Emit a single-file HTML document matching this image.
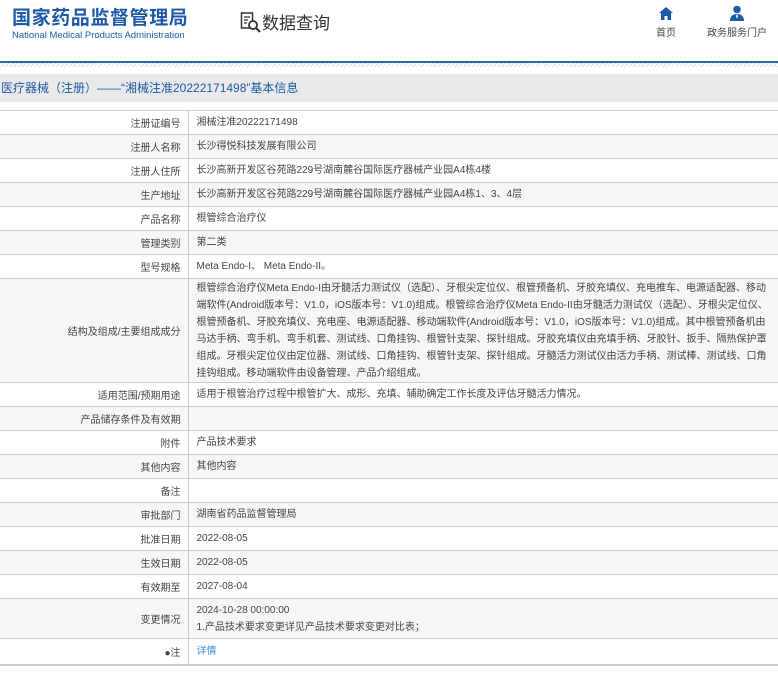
<!DOCTYPE html>
<html><head><meta charset="utf-8"><style>
*{margin:0;padding:0;box-sizing:border-box}
body{width:778px;height:673px;background:#fff;font-family:"Liberation Sans","Noto Sans CJK SC",sans-serif;position:relative;overflow:hidden;color:#333}
.abs{position:absolute}
.logo{left:12px;top:7px;font-size:19px;line-height:24px;font-weight:bold;color:#1c5aa8;letter-spacing:0.6px}
.en{left:12px;top:30px;font-size:9.5px;line-height:12px;color:#1c5aa8}
.sq{left:240px;top:9px;font-size:17px;color:#333}
.nav{font-size:10px;color:#444;text-align:center}
.line{left:0;top:61px;width:778px;height:2px;background:#1d6aa0}
.hatch{left:0;top:63px;width:778px;height:4px;background:repeating-linear-gradient(135deg,#ddd 0 1px,#fff 1px 3px)}
.bar{left:0;top:74px;width:778px;height:28px;background:#e9e9e9;font-size:12px;color:#1c5aa8;line-height:28px;padding-left:1px}
table{position:absolute;left:0;top:110px;width:778px;border-collapse:collapse;font-size:10px}
td{border:1px solid #ccc;height:24px;vertical-align:middle;color:#444}
td.l{width:188px;text-align:right;padding-right:7px;border-left:none}
td.v{padding-left:8px;border-right:none;line-height:17px}
tr:nth-child(even) td{background:#f6f6f6}
tr:last-child td{border-bottom:2px solid #ccc}
</style></head><body>
<div class="abs logo">国家药品监督管理局</div>
<div class="abs en">National Medical Products Administration</div>
<div class="abs sq"><svg width="22" height="22" viewBox="0 0 22 22" style="vertical-align:-4px"><rect x="1.5" y="2" width="11" height="15" fill="none" stroke="#333" stroke-width="1.5"/><path d="M4 6h6M4 9h4M4 12h3" stroke="#333" stroke-width="1.3"/><circle cx="13" cy="14" r="4" fill="#fff" stroke="#333" stroke-width="1.8"/><path d="M16 17l4 4" stroke="#333" stroke-width="2.2"/></svg>数据查询</div>
<svg class="abs" style="left:659px;top:7px" width="14" height="13" viewBox="0 0 14 13"><path d="M7 0L0 6h2v7h3.5V9h3v4H12V6h2z" fill="#1c5aa8"/></svg>
<div class="abs nav" style="left:646px;top:24px;width:40px">首页</div>
<svg class="abs" style="left:729px;top:5px" width="16" height="16" viewBox="0 0 16 16"><circle cx="8" cy="4.5" r="3.8" fill="#1c5aa8"/><path d="M1 16c0-5 3-7 7-7s7 2 7 7z" fill="#1c5aa8"/><path d="M8 9l-1 2 1 3 1-3z" fill="#fff"/></svg>
<div class="abs nav" style="left:702px;top:24px;width:70px">政务服务门户</div>
<div class="abs line"></div><div class="abs hatch"></div>
<div class="abs bar">医疗器械（注册）——“湘械注准20222171498”基本信息</div>
<table>
<tr><td class="l">注册证编号</td><td class="v">湘械注准20222171498</td></tr>
<tr><td class="l">注册人名称</td><td class="v">长沙得悦科技发展有限公司</td></tr>
<tr><td class="l">注册人住所</td><td class="v">长沙高新开发区谷苑路229号湖南麓谷国际医疗器械产业园A4栋4楼</td></tr>
<tr><td class="l">生产地址</td><td class="v">长沙高新开发区谷苑路229号湖南麓谷国际医疗器械产业园A4栋1、3、4层</td></tr>
<tr><td class="l">产品名称</td><td class="v">根管综合治疗仪</td></tr>
<tr><td class="l">管理类别</td><td class="v">第二类</td></tr>
<tr><td class="l">型号规格</td><td class="v">Meta Endo-I、 Meta Endo-II。</td></tr>
<tr><td class="l" style="height:104px">结构及组成/主要组成成分</td><td class="v" style="padding-right:6px">根管综合治疗仪Meta Endo-I由牙髓活力测试仪（选配）、牙根尖定位仪、根管预备机、牙胶充填仪、充电推车、电源适配器、移动端软件(Android版本号：V1.0，iOS版本号：V1.0)组成。根管综合治疗仪Meta Endo-II由牙髓活力测试仪（选配）、牙根尖定位仪、根管预备机、牙胶充填仪、充电座、电源适配器、移动端软件(Android版本号：V1.0，iOS版本号：V1.0)组成。其中根管预备机由马达手柄、弯手机、弯手机套、测试线、口角挂钩、根管针支架、探针组成。牙胶充填仪由充填手柄、牙胶针、扳手、隔热保护罩组成。牙根尖定位仪由定位器、测试线、口角挂钩、根管针支架、探针组成。牙髓活力测试仪由活力手柄、测试棒、测试线、口角挂钩组成。移动端软件由设备管理、产品介绍组成。</td></tr>
<tr><td class="l">适用范围/预期用途</td><td class="v">适用于根管治疗过程中根管扩大、成形、充填、辅助确定工作长度及评估牙髓活力情况。</td></tr>
<tr><td class="l">产品储存条件及有效期</td><td class="v"></td></tr>
<tr><td class="l">附件</td><td class="v">产品技术要求</td></tr>
<tr><td class="l">其他内容</td><td class="v">其他内容</td></tr>
<tr><td class="l">备注</td><td class="v"></td></tr>
<tr><td class="l">审批部门</td><td class="v">湖南省药品监督管理局</td></tr>
<tr><td class="l">批准日期</td><td class="v">2022-08-05</td></tr>
<tr><td class="l">生效日期</td><td class="v">2022-08-05</td></tr>
<tr><td class="l">有效期至</td><td class="v">2027-08-04</td></tr>
<tr><td class="l" style="height:40px">变更情况</td><td class="v">2024-10-28 00:00:00<br>1.产品技术要求变更详见产品技术要求变更对比表；</td></tr>
<tr><td class="l" style="height:26px">●注</td><td class="v" style="color:#3a8ee6">详情</td></tr>
</table>
</body></html>
